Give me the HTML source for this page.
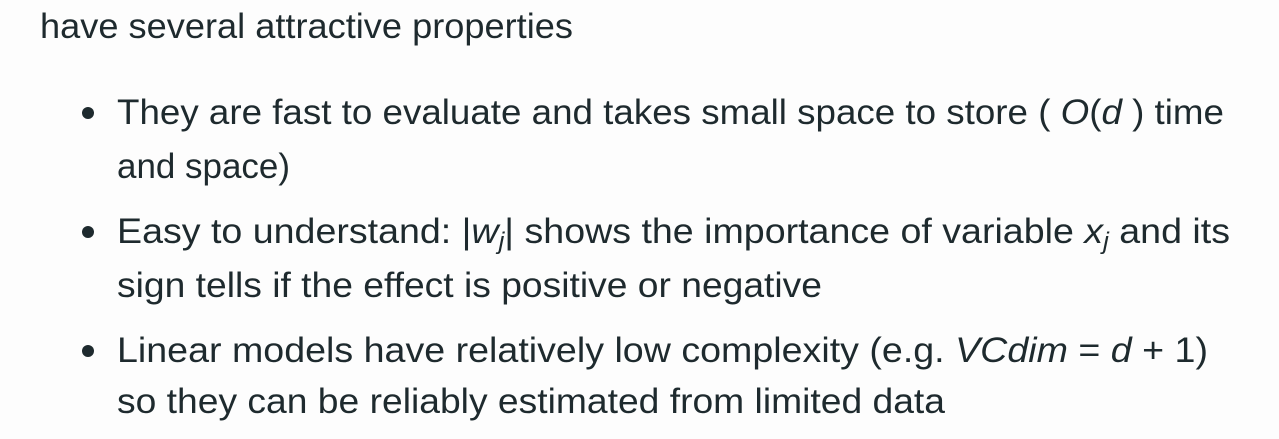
<!DOCTYPE html>
<html><head><meta charset="utf-8"><style>
html,body{margin:0;padding:0;background:#fdfdfd;}
svg{display:block}
text{font-family:"Liberation Sans","DejaVu Sans",sans-serif;font-size:35px;fill:#1e2a2e;}
.i{font-style:italic;}
</style></head><body>
<svg width="1279" height="439" viewBox="0 0 1279 439" xmlns="http://www.w3.org/2000/svg">
<text x="40" y="38" textLength="533" lengthAdjust="spacingAndGlyphs">have several attractive properties</text>
<circle cx="88" cy="113" r="6" fill="#1e2a2e"/>
<text x="117" y="124" textLength="1107" lengthAdjust="spacingAndGlyphs">They are fast to evaluate and takes small space to store ( <tspan class="i">O</tspan>(<tspan class="i">d</tspan> ) time</text>
<text x="117" y="178" textLength="173" lengthAdjust="spacingAndGlyphs">and space)</text>
<circle cx="88" cy="232" r="6" fill="#1e2a2e"/>
<text x="117" y="243" textLength="1113" lengthAdjust="spacingAndGlyphs">Easy to understand:  |<tspan class="i">w</tspan><tspan class="i" font-size="24" dy="6">j</tspan><tspan dy="-6">| shows the importance of variable </tspan><tspan class="i">x</tspan><tspan class="i" font-size="24" dy="6">j</tspan><tspan dy="-6"> and its</tspan></text>
<text x="117" y="297" textLength="705" lengthAdjust="spacingAndGlyphs">sign tells if the effect is positive or negative</text>
<circle cx="88" cy="351" r="6" fill="#1e2a2e"/>
<text x="117" y="362" textLength="1091" lengthAdjust="spacingAndGlyphs">Linear models have relatively low complexity (e.g.  <tspan class="i">VCdim</tspan> = <tspan class="i">d</tspan> + 1)</text>
<text x="117" y="413" textLength="828" lengthAdjust="spacingAndGlyphs">so they can be reliably estimated from limited data</text>
</svg>
</body></html>
